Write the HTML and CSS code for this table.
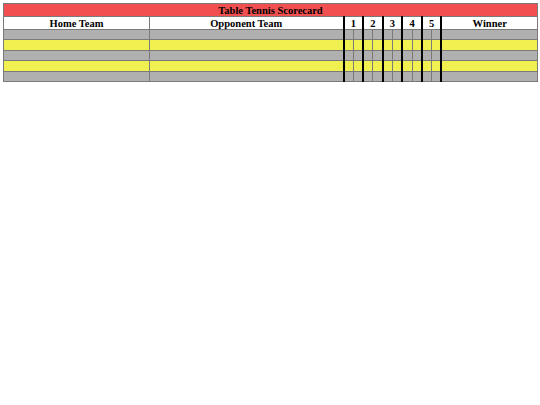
FILE: index.html
```html
<!DOCTYPE html>
<html>
<head>
<meta charset="utf-8">
<link rel="stylesheet" href="styles.css">
</head>
<body>
<table class="score">
  <colgroup>
    <col class="c-home"><col class="c-opp">
    <col class="c-sub"><col class="c-sub"><col class="c-sub"><col class="c-sub"><col class="c-sub">
    <col class="c-sub"><col class="c-sub"><col class="c-sub"><col class="c-sub"><col class="c-sub">
    <col class="c-win">
  </colgroup>
  <tr class="title"><th colspan="13">Table Tennis Scorecard</th></tr>
  <tr class="head">
    <th>Home Team</th><th>Opponent Team</th>
    <th colspan="2" class="g">1</th><th colspan="2" class="g">2</th><th colspan="2" class="g">3</th><th colspan="2" class="g">4</th><th colspan="2" class="g">5</th>
    <th class="g">Winner</th>
  </tr>
  <tr class="row gray"><td></td><td></td><td class="g"></td><td></td><td class="g"></td><td></td><td class="g"></td><td></td><td class="g"></td><td></td><td class="g"></td><td></td><td class="g"></td></tr>
  <tr class="row yellow"><td></td><td></td><td class="g"></td><td></td><td class="g"></td><td></td><td class="g"></td><td></td><td class="g"></td><td></td><td class="g"></td><td></td><td class="g"></td></tr>
  <tr class="row gray"><td></td><td></td><td class="g"></td><td></td><td class="g"></td><td></td><td class="g"></td><td></td><td class="g"></td><td></td><td class="g"></td><td></td><td class="g"></td></tr>
  <tr class="row yellow"><td></td><td></td><td class="g"></td><td></td><td class="g"></td><td></td><td class="g"></td><td></td><td class="g"></td><td></td><td class="g"></td><td></td><td class="g"></td></tr>
  <tr class="row gray"><td></td><td></td><td class="g"></td><td></td><td class="g"></td><td></td><td class="g"></td><td></td><td class="g"></td><td></td><td class="g"></td><td></td><td class="g"></td></tr>
</table>
</body>
</html>
```

FILE: styles.css
```css
html, body {
  margin: 0;
  background: #ffffff;
}
body {
  padding: 3px;
  font-family: "Liberation Serif", "Times New Roman", serif;
}
.score {
  width: 534px;
  table-layout: fixed;
  border-collapse: collapse;
  border: 1px solid #808080;
}
.c-home { width: 146px; }
.c-opp { width: 194px; }
.c-sub { width: 9.8px; }
.c-win { width: 96px; }
.score th, .score td {
  padding: 0;
  border: 1px solid #7a7a7a;
  font-size: 10.5px;
  font-weight: bold;
  text-align: center;
  line-height: 11px;
  color: #000;
}
.title th {
  background: #f25050;
  height: 12px;
}
.head th {
  background: #ffffff;
  height: 12px;
}
.row td {
  height: 9.4px;
}
.gray td { background: #b0b0b0; }
.yellow td { background: #f0f050; }
.score .g { border-left: 2px solid #000; }
```
